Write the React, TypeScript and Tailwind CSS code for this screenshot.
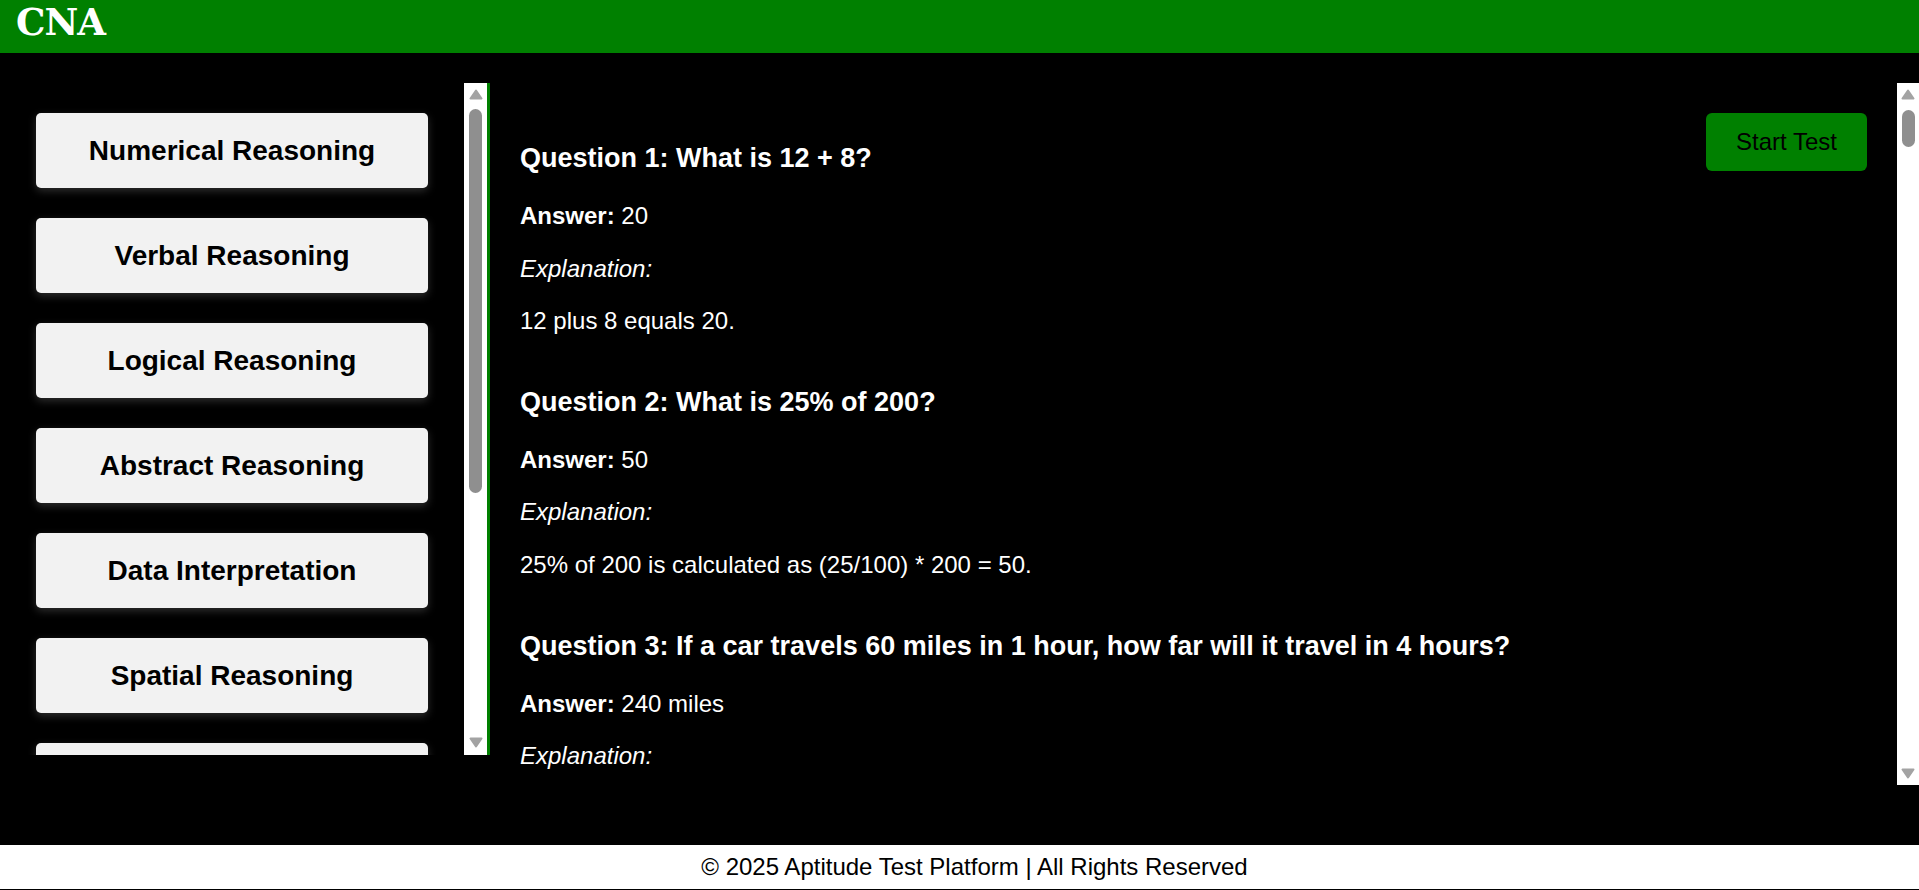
const topics = [
  "Numerical Reasoning",
  "Verbal Reasoning",
  "Logical Reasoning",
  "Abstract Reasoning",
  "Data Interpretation",
  "Spatial Reasoning",
  "Mechanical Reasoning",
];

const questions = [
  { q: "What is 12 + 8?", a: "20", e: "12 plus 8 equals 20." },
  { q: "What is 25% of 200?", a: "50", e: "25% of 200 is calculated as (25/100) * 200 = 50." },
  {
    q: "If a car travels 60 miles in 1 hour, how far will it travel in 4 hours?",
    a: "240 miles",
    e: "60 miles per hour * 4 hours = 240 miles.",
  },
];

function Arrow({ down }: { down?: boolean }) {
  return (
    <svg width="14" height="11" viewBox="0 0 14 11" className={down ? "block rotate-180" : "block"}>
      <path d="M7 1.5 L12.5 9.5 L1.5 9.5 Z" fill="#a3a3a3" stroke="#a3a3a3" strokeWidth="2" strokeLinejoin="round" />
    </svg>
  );
}

export default function App() {
  return (
    <div className="h-screen flex flex-col bg-black font-['Liberation_Sans',Arial,sans-serif] overflow-hidden">
      {/* header */}
      <header className="h-[53px] shrink-0 bg-[#008000] pl-[16px]">
        <h1 className="font-['DejaVu_Serif',serif] font-bold text-[37px] leading-[44px] text-white tracking-[-1px]">CNA</h1>
      </header>

      <div className="flex-1 flex items-start pt-[30px]">
        {/* sidebar */}
        <aside className="h-[672px] w-[490px] shrink-0 flex border-r-[3px] border-[#008000]">
          <div className="w-[464px] h-full overflow-hidden flex flex-col gap-[30px] pt-[30px] px-[36px]">
            {topics.map((t) => (
              <button
                key={t}
                className="h-[75px] shrink-0 w-full bg-[#f2f2f2] rounded-[5px] text-black text-[28px] font-bold shadow-[0_3px_8px_rgba(255,255,255,0.18)]"
              >
                {t}
              </button>
            ))}
          </div>
          <div className="w-[23px] h-full bg-white flex flex-col items-center">
            <div className="mt-[6px]"><Arrow /></div>
            <div className="mt-[9px] w-[13px] h-[384px] rounded-full bg-[#8f8f8f]" />
            <div className="mt-auto mb-[7px]"><Arrow down /></div>
          </div>
        </aside>

        {/* main */}
        <main className="flex-1 h-[702px] flex">
          <div className="flex-1 h-full overflow-hidden flex items-start px-[30px] pt-[30px] text-white">
            <div className="flex-1 pt-[30px]">
              {questions.map((item, i) => (
                <div key={i} className="mb-[52px]">
                  <h3 className="text-[27px] leading-[31px] font-bold mb-[28px]">
                    Question {i + 1}: {item.q}
                  </h3>
                  <p className="text-[24px] leading-[27.6px] mb-[25px]">
                    <strong>Answer:</strong> {item.a}
                  </p>
                  <p className="text-[24px] leading-[27.6px] italic mb-[25px]">Explanation:</p>
                  <p className="text-[24px] leading-[27.6px]">{item.e}</p>
                </div>
              ))}
            </div>
            <button className="shrink-0 w-[161px] h-[58px] bg-[#008000] rounded-[6px] text-black text-[24px]">
              Start Test
            </button>
          </div>
          <div className="w-[22px] h-full bg-white flex flex-col items-center">
            <div className="mt-[6px]"><Arrow /></div>
            <div className="mt-[10px] w-[13px] h-[37px] rounded-full bg-[#8f8f8f]" />
            <div className="mt-auto mb-[6px]"><Arrow down /></div>
          </div>
        </main>
      </div>

      {/* footer */}
      <footer className="h-[45px] shrink-0 bg-white border-b border-black flex items-center justify-center pl-[30px] text-black text-[24px]">
        © 2025 Aptitude Test Platform | All Rights Reserved
      </footer>
    </div>
  );
}
